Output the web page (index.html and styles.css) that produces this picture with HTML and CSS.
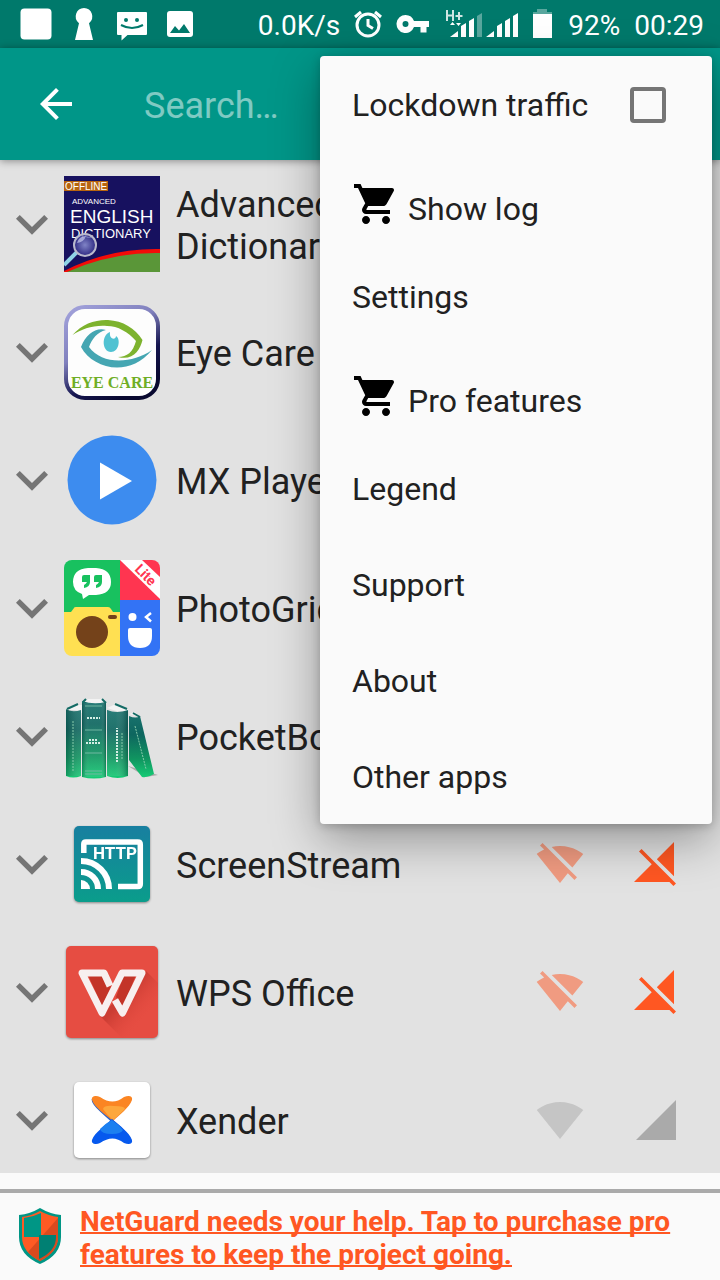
FILE: index.html
```html
<!DOCTYPE html>
<html lang="en">
<head>
  <meta charset="UTF-8" />
  <meta name="viewport" content="width=device-width, initial-scale=1.0"/>
  <title>NetGuard</title>
  <link rel="stylesheet" href="styles.css">
</head>
<body>
  <!-- shared icons -->
  <svg class="sprite" aria-hidden="true">
    <symbol id="chevron" viewBox="0 0 24 24"><path d="M16.59 8.59L12 13.17 7.41 8.59 6 10l6 6 6-6z"/></symbol>
    <symbol id="wifi" viewBox="0 0 24 24"><path d="M12.01 21.49L23.64 7c-.45-.34-4.93-4-11.64-4C5.28 3 .81 6.66.36 7l11.63 14.49.01.01.01-.01z"/></symbol>
    <symbol id="wifi-off" viewBox="0 0 24 24"><path d="M23.64 7c-.45-.34-4.93-4-11.64-4-1.5 0-2.89.19-4.15.48L18.18 13.8 23.64 7zm-6.6 8.22L3.27 1.44 2 2.72l2.05 2.06C1.91 5.76.59 6.82.36 7l11.63 14.49.01.01.01-.01 3.9-4.86 3.32 3.32 1.27-1.27-3.46-3.46z"/></symbol>
    <symbol id="cell" viewBox="0 0 24 24"><path d="M2 22h20V2z"/></symbol>
    <symbol id="cell-off" viewBox="0 0 24 24"><path d="M21 1l-8.59 8.59L21 18.18V1zM4.77 4.5L3.5 5.77l6.36 6.36L1 21h17.73l2 2L22 21.73 4.77 4.5z"/></symbol>
    <symbol id="cart" viewBox="0 0 24 24"><path d="M7 18c-1.1 0-1.99.9-1.99 2S5.9 22 7 22s2-.9 2-2-.9-2-2-2zM1 2v2h2l3.6 7.59-1.35 2.45c-.16.28-.25.61-.25.96 0 1.1.9 2 2 2h12v-2H7.42c-.14 0-.25-.11-.25-.25l.03-.12.9-1.63h7.45c.75 0 1.41-.41 1.75-1.03l3.58-6.49c.08-.14.12-.31.12-.48 0-.55-.45-1-1-1H5.21l-.94-2H1zm16 16c-1.1 0-1.99.9-1.99 2s.89 2 1.99 2 2-.9 2-2-.9-2-2-2z"/></symbol>
  </svg>

  <div class="app">
    <div class="status-bar">
      <div class="notifications">
        <svg viewBox="0 0 48 48"><rect x="8.500" y="8.500" width="31" height="31" rx="4"/></svg>
        <svg viewBox="0 0 48 48"><path d="M24 8a8.500 8.500 0 0 0-5 15.200L15 40h18l-4-16.800A8.500 8.500 0 0 0 24 8z"/></svg>
        <svg viewBox="0 0 48 48">
          <path d="M10 12h28a1 1 0 0 1 1 1v21a1 1 0 0 1-1 1H19.500l-6 5.500V35H10a1 1 0 0 1-1-1V13a1 1 0 0 1 1-1z"/>
          <g class="cut"><circle cx="18" cy="20" r="2"/><circle cx="29" cy="20" r="2"/></g>
          <path class="smile" d="M13 25q11 6 22 0"/>
        </svg>
        <svg viewBox="0 0 48 48">
          <rect x="11" y="11" width="26" height="26" rx="3"/>
          <path class="cut" d="M14 33l5-7 4 4.500 5-6.500 6 9z"/>
        </svg>
      </div>
      <div class="system">
        <span>0.0K/s</span>
        <svg class="alarm" viewBox="0 0 28 28">
          <circle cx="14" cy="15" r="11"/>
          <path d="M14 9v6.500l5 3M1 7l6-5M27 7l-6-5"/>
        </svg>
        <svg class="key" viewBox="0 0 34 18">
          <path fill-rule="evenodd" d="M9.500 0a9 9 0 1 0 8.500 12h6.500v5.500h6V12H33V6H18A9 9 0 0 0 9.500 0zm0 6a3 3 0 1 1 0 6 3 3 0 0 1 0-6z"/>
        </svg>
        <svg class="signal" viewBox="0 0 74 30">
          <path class="net" d="M3 1v11M9 1v11M3 6.500h6M11.500 7h7M15 3v8"/>
          <path d="M6 16l2.500-3 2.500 3zM12 14h5l-2.500 3zM6 28l8-6v6zM17 28V17l5-3v14zM25 28V12l5-3v19z"/>
          <path class="dim" d="M33 28V7l5-3v24z"/>
          <path d="M42 28l8-6v6zM53 28V17l5-3v14zM61 28V12l5-3v19zM69 28V7l5-3v24z"/>
        </svg>
        <svg class="battery" viewBox="0 0 22 30">
          <path class="dim" d="M5 0h10v3h5v4H1V3h4z"/>
          <path d="M1 5h19v24H1z"/>
        </svg>
        <span>92%</span>
        <span>00:29</span>
      </div>
    </div>

    <header class="app-bar">
      <button class="back" aria-label="Back">
        <svg viewBox="0 0 24 24"><path d="M20 11H7.830l5.590-5.590L12 4l-8 8 8 8 1.410-1.410L7.830 13H20v-2z"/></svg>
      </button>
      <input class="search" type="text" placeholder="Search…" aria-label="Search">
    </header>

    <ul class="app-list">
      <li class="row">
        <button class="expand" aria-label="Expand"><svg><use href="#chevron"/></svg></button>
        <svg class="app-icon" viewBox="0 0 96 96">
          <defs><radialGradient id="lens"><stop offset="0" stop-color="#9aa0e0"/><stop offset="1" stop-color="#34308c"/></radialGradient></defs>
          <path fill="#17115f" d="M0 0h96v96H0z"/>
          <path fill="#b8650f" d="M0 5h44v10H0z"/>
          <path fill="#f30c08" d="M0 96v-1q45-23 96-22v23z"/>
          <path fill="#5a9638" d="M3 96q44-20 93-19v19z"/>
          <g class="dict-text">
            <text x="1" y="14" font-size="10">OFFLINE</text>
            <text x="8" y="28" font-size="8">ADVANCED</text>
            <text x="6" y="47" font-size="19">ENGLISH</text>
            <text x="7" y="62" font-size="13">DICTIONARY</text>
          </g>
          <path stroke="#8fd3e6" stroke-width="4" d="M13 76L0 89"/>
          <circle cx="21" cy="69" r="11" fill="url(#lens)" fill-opacity=".8" stroke="#b9b9cc" stroke-width="2"/>
          <path fill="#dfe2ff" fill-opacity=".6" d="M13 67q2-7 9-7-2 6-9 7z"/>
        </svg>
        <span class="name">Advanced English Dictionary</span>
        <button class="toggle wifi blocked" aria-label="Wi-Fi"><svg><use href="#wifi-off"/></svg></button>
        <button class="toggle blocked" aria-label="Mobile"><svg><use href="#cell-off"/></svg></button>
      </li>

      <li class="row">
        <button class="expand" aria-label="Expand"><svg><use href="#chevron"/></svg></button>
        <svg class="app-icon" viewBox="0 0 96 96">
          <defs><linearGradient id="frame" x1="0" y1="0" x2=".6" y2="1"><stop offset="0" stop-color="#a3a3dc"/><stop offset=".45" stop-color="#8080bd"/><stop offset=".75" stop-color="#15154f"/><stop offset="1" stop-color="#090930"/></linearGradient></defs>
          <rect x="2" y="3" width="92" height="91" rx="19" fill="#fdfdfd" stroke="url(#frame)" stroke-width="4"/>
          <path fill="#7db32e" d="M8.500 31C18 20 31 15.500 44 16c15 1 27 8 34.500 20C76 46 69 57 54 53c9 0 15-5 18-16C64 28 54 22 43 22c-14-1-25 3-34.500 9z"/>
          <path fill="#45a6b2" d="M42 26c-10-3-20 4-25 17 12 22 48 31 71 3-20 14-50 15-63-3 3-8 8-15 17-17z"/>
          <path fill="#50c2d2" d="M46 28c-9 3-8 20 1 20 8 0 10-13 5-16 0 4-7 4-6-4z"/>
          <text class="eye-text" x="48" y="84">EYE CARE</text>
        </svg>
        <span class="name">Eye Care</span>
        <button class="toggle wifi blocked" aria-label="Wi-Fi"><svg><use href="#wifi-off"/></svg></button>
        <button class="toggle blocked" aria-label="Mobile"><svg><use href="#cell-off"/></svg></button>
      </li>

      <li class="row">
        <button class="expand" aria-label="Expand"><svg><use href="#chevron"/></svg></button>
        <svg class="app-icon" viewBox="0 0 96 96">
          <circle cx="48" cy="48" r="44.500" fill="#3d8cef"/>
          <path fill="#fff" d="M36 30.500L68 49 36 67.500z"/>
        </svg>
        <span class="name">MX Player</span>
        <button class="toggle wifi blocked" aria-label="Wi-Fi"><svg><use href="#wifi-off"/></svg></button>
        <button class="toggle blocked" aria-label="Mobile"><svg><use href="#cell-off"/></svg></button>
      </li>

      <li class="row">
        <button class="expand" aria-label="Expand"><svg><use href="#chevron"/></svg></button>
        <svg class="app-icon" viewBox="0 0 96 96">
          <defs><clipPath id="tile"><rect width="96" height="96" rx="8"/></clipPath></defs>
          <g clip-path="url(#tile)">
            <path fill="#18c15f" d="M0 0h56v56H0z"/>
            <path fill="#ffe052" d="M0 52h7l3-4q0-1 2-1h32q2 0 3 2l2 3h7v44H0z"/>
            <path fill="#ff3550" d="M56 0h40v40H56z"/>
            <path fill="#3373f5" d="M56 40h40v56H56z"/>
            <path fill="#fff" d="M56 0h22l18 17v22z"/>
            <path fill="#fff" d="M24 8h8q15 1 15 14 0 12-15 13h-7l-6 4-1-5Q9 31 9 22 9 9 24 8z"/>
            <path fill="#18c15f" d="M20 15h6v7q0 5-6 6v-3q2-1 3-3h-5v-5q0-2 2-2zM32 15h6v7q0 5-6 6v-3q2-1 3-3h-5v-5q0-2 2-2z"/>
            <circle cx="28" cy="72" r="16" fill="#74421a"/>
            <rect x="44" y="55" width="9" height="4" rx="2" fill="#74421a"/>
            <circle cx="68.500" cy="57" r="4" fill="#fff"/>
            <path fill="none" stroke="#fff" stroke-width="2.500" d="M87 53l-5 4 5 4.500"/>
            <path fill="#fff" d="M66 68h20q2 0 2 2v6q0 12-12 12T64 76v-6q0-2 2-2z"/>
            <text class="lite-text" x="70" y="10" transform="rotate(45 70 10)">Lite</text>
          </g>
        </svg>
        <span class="name">PhotoGrid</span>
        <button class="toggle wifi blocked" aria-label="Wi-Fi"><svg><use href="#wifi-off"/></svg></button>
        <button class="toggle blocked" aria-label="Mobile"><svg><use href="#cell-off"/></svg></button>
      </li>

      <li class="row">
        <button class="expand" aria-label="Expand"><svg><use href="#chevron"/></svg></button>
        <svg class="app-icon" viewBox="0 0 96 96">
          <defs>
            <linearGradient id="book" x1="0" y1="0" x2="0" y2="1"><stop offset="0" stop-color="#17716c"/><stop offset=".3" stop-color="#0e665f"/><stop offset=".7" stop-color="#109560"/><stop offset="1" stop-color="#16cb75"/></linearGradient>
            <linearGradient id="spine"><stop offset="0" stop-color="#002b28" stop-opacity=".3"/><stop offset=".3" stop-color="#fff" stop-opacity=".08"/><stop offset=".8" stop-color="#fff" stop-opacity=".08"/><stop offset="1" stop-color="#002b28" stop-opacity=".35"/></linearGradient>
          </defs>
          <path fill="#a9a9a9" d="M64 78l30 9-12 2z"/>
          <path fill="#f3f3f3" d="M3 22l10-5h5v8zM20 14l4-3h16l3 4-9 3zM43 20l9-4 12 6-5 3zM65 26l6-2 5 5z"/>
          <path fill="url(#book)" d="M2 21q6 4 15 1v66q-8 3-15 0z"/>
          <path fill="url(#book)" d="M18 13q11 4 24 1v75q-12 3-24 0z"/>
          <path fill="url(#book)" d="M43 22q10 4 21 0v66q-10 4-21 0z"/>
          <path fill="url(#book)" d="M65 28q7 3 11 0l14 58q-6 4-12 3L65 72z"/>
          <path fill="url(#spine)" d="M2 22h15v66H2zM43 23h21v65H43z"/>
          <path fill="url(#spine)" d="M18 15h24v74H18z"/>
          <path fill="none" stroke="#146b65" stroke-width="2" d="M3 21l11-5M19 14l3-3M38 11l4 4M51 16l12 5M69 25l7 4"/>
          <path fill="none" stroke="#71b8a2" d="M21 18h17M21 42h17M21 65h17M21 83h17M21 86h17"/>
          <path fill="none" stroke="#d5eee4" stroke-width="2" stroke-dasharray="2 1" d="M23 30h13M25 52h8M22 55h14M53 74V40"/>
          <path fill="none" stroke="#85caaa" stroke-dasharray="2 1" d="M58 71V45M9 83V33M71 38l11 43"/>
        </svg>
        <span class="name">PocketBook</span>
        <button class="toggle wifi blocked" aria-label="Wi-Fi"><svg><use href="#wifi-off"/></svg></button>
        <button class="toggle blocked" aria-label="Mobile"><svg><use href="#cell-off"/></svg></button>
      </li>

      <li class="row">
        <button class="expand" aria-label="Expand"><svg><use href="#chevron"/></svg></button>
        <svg class="app-icon raised" viewBox="0 0 96 96">
          <defs><linearGradient id="cast" x1="0" y1="0" x2="0" y2="1"><stop offset="0" stop-color="#187fa0"/><stop offset="1" stop-color="#0a9d8b"/></linearGradient></defs>
          <rect x="10" y="10" width="76" height="76" rx="5" fill="url(#cast)"/>
          <g fill="none" stroke="#fff">
            <path stroke-width="5.500" d="M19.800 37V28q0-2 2-2h52q2.500 0 2.500 2.500V68q0 2.500-2.500 2.500H54"/>
            <path stroke-width="6" d="M17 56a17 17 0 0 1 17 17M17 45a28 28 0 0 1 28 28"/>
          </g>
          <path fill="#fff" d="M17 64a9 9 0 0 1 9 9h-9z"/>
          <text class="http-text" x="29" y="43">HTTP</text>
        </svg>
        <span class="name">ScreenStream</span>
        <button class="toggle wifi blocked" aria-label="Wi-Fi"><svg><use href="#wifi-off"/></svg></button>
        <button class="toggle blocked" aria-label="Mobile"><svg><use href="#cell-off"/></svg></button>
      </li>

      <li class="row">
        <button class="expand" aria-label="Expand"><svg><use href="#chevron"/></svg></button>
        <svg class="app-icon raised" viewBox="0 0 96 96">
          <defs><linearGradient id="fade" x1="0" y1="0" x2="1" y2="1"><stop offset=".4" stop-color="#b93229" stop-opacity=".6"/><stop offset=".75" stop-color="#e64c41" stop-opacity="0"/></linearGradient></defs>
          <rect x="2" y="2" width="92" height="92" rx="5" fill="#e64d42"/>
          <path fill="url(#fade)" d="M82 27l12 12v34L74 94H58L36 72z"/>
          <path fill="#c33428" d="M24 31h17l6 12-9 19zM60 31h12L59 62l-7-9z"/>
          <path fill="none" stroke="#f7efef" stroke-width="7" stroke-linejoin="round" d="M46 42l-6-13H18l20 40 20-40h20L58.500 69 51 56"/>
        </svg>
        <span class="name">WPS Office</span>
        <button class="toggle wifi blocked" aria-label="Wi-Fi"><svg><use href="#wifi-off"/></svg></button>
        <button class="toggle blocked" aria-label="Mobile"><svg><use href="#cell-off"/></svg></button>
      </li>

      <li class="row">
        <button class="expand" aria-label="Expand"><svg><use href="#chevron"/></svg></button>
        <svg class="app-icon raised" viewBox="0 0 96 96">
          <rect x="10" y="10" width="76" height="76" rx="5" fill="#fff"/>
          <path fill="#2b62c9" d="M27.500 27q0 5 9 13l11 10 2-3z"/>
          <path fill="#fb8523" d="M28 28c-1-4 4-5 8-3 9 6 16 6 24 0 5-2 9-1 8 3-3 8-12 14-19 21C41 42 31 36 28 28z"/>
          <path fill="#fda73c" d="M39 37q1-4 11-3 11 0 11 3-6 6-12 11-6-5-10-11z"/>
          <path fill="#e8672c" d="M48 47l12 11q7 7 8 12l-3-4-18-17z"/>
          <path fill="#0659ee" d="M28 68c-1 4 4 5 8 3 9-6 16-6 24 0 5 2 9 1 8-3-3-8-12-14-20-21C41 54 31 60 28 68z"/>
          <path fill="#1c80f0" d="M36 57q6-6 12-9 6 4 11 10-2 4-11 4-11 0-12-5z"/>
        </svg>
        <span class="name">Xender</span>
        <button class="toggle wifi" aria-label="Wi-Fi"><svg><use href="#wifi"/></svg></button>
        <button class="toggle" aria-label="Mobile"><svg><use href="#cell"/></svg></button>
      </li>
    </ul>

    <footer class="banner">
      <svg class="shield" viewBox="0 0 42 60">
        <path fill="#009685" d="M21 0q10 6 21 7v22q0 18-21 27Q0 47 0 29V7q11-1 21-7z"/>
        <path fill="#ff5a24" d="M21 3q9 5 18 6v20q0 15-18 24Q3 44 3 29V9q9-1 18-6z"/>
        <path fill="#d94a1f" d="M39 10v19q0 15-18 24-8-4-12-9z"/>
        <path fill="#009685" d="M22 5v24H5V10q9-1 17-5z"/>
        <path fill="#008073" d="M20 27h17v2q0 14-17 22z"/>
      </svg>
      <a href="#">NetGuard needs your help. Tap to purchase pro features to keep the project going.</a>
    </footer>

    <div class="menu">
      <label class="menu-item" for="lockdown">
        Lockdown traffic
        <input type="checkbox" id="lockdown">
      </label>
      <button class="menu-item with-icon"><svg><use href="#cart"/></svg>Show log</button>
      <button class="menu-item">Settings</button>
      <button class="menu-item with-icon"><svg><use href="#cart"/></svg>Pro features</button>
      <button class="menu-item">Legend</button>
      <button class="menu-item">Support</button>
      <button class="menu-item">About</button>
      <button class="menu-item">Other apps</button>
    </div>
  </div>
</body>
</html>
```
FILE: styles.css
```css
* {
  box-sizing: border-box;
  margin: 0;
  padding: 0;
}

body {
  font-family: Roboto, "Noto Sans", sans-serif;
  background-color: #fafafa;
  color: #212121;
}

button {
  border: none;
  background: none;
  font: inherit;
  color: inherit;
  cursor: pointer;
}

svg {
  display: block;
  flex-shrink: 0;
}

.sprite {
  position: absolute;
  width: 0;
  height: 0;
}

.app {
  position: relative;
  display: flex;
  flex-direction: column;
  height: 100vh;
  overflow: hidden;
}

/* status bar */
.status-bar {
  display: flex;
  flex-shrink: 0;
  justify-content: space-between;
  align-items: center;
  height: 48px;
  padding: 0 16px 0 12px;
  background-color: #00796b;
  color: #fff;
  font-size: 28px;
  line-height: 32px;
}

.status-bar svg {
  fill: #fff;
}

.notifications {
  display: flex;
}

.notifications svg {
  width: 48px;
  height: 48px;
}

.notifications .cut {
  fill: #00796b;
}

.notifications .smile {
  fill: none;
  stroke: #00796b;
  stroke-width: 2;
}

.system {
  display: flex;
  align-items: center;
  gap: 14px;
}

.system span {
  padding-top: 4px;
}

.system .dim {
  opacity: 0.35;
}

.system .alarm {
  width: 28px;
  height: 28px;
  fill: none;
  stroke: #fff;
  stroke-width: 3;
}

.key {
  width: 34px;
  height: 18px;
}

.signal {
  width: 74px;
  height: 30px;
}

.signal .net {
  fill: none;
  stroke: #d0e6e3;
  stroke-width: 2;
}

.battery {
  width: 22px;
  height: 30px;
}

/* toolbar */
.app-bar {
  display: flex;
  flex-shrink: 0;
  align-items: center;
  gap: 64px;
  height: 112px;
  padding: 0 32px;
  background-color: #009688;
  box-shadow: 0 1px 8px rgba(0, 0, 0, 0.4);
  z-index: 1;
}

.back svg {
  width: 48px;
  height: 48px;
  fill: #fff;
}

.search {
  flex: 1;
  min-width: 0;
  padding-top: 4px;
  border: none;
  outline: none;
  background: none;
  color: #fff;
  font: inherit;
  font-size: 36px;
}

.search::placeholder {
  color: rgba(255, 255, 255, 0.5);
}

/* application list */
.app-list {
  flex: 1;
  min-height: 0;
  overflow: hidden;
  list-style: none;
  background-color: #e2e2e2;
}

.row {
  display: flex;
  align-items: center;
  height: 128px;
  padding-right: 16px;
}

.expand svg {
  width: 64px;
  height: 64px;
  fill: #757575;
}

.app-icon {
  width: 96px;
  height: 96px;
}

.raised {
  filter: drop-shadow(0 1px 1px rgba(0, 0, 0, 0.4));
}

.name {
  flex: 1;
  padding: 4px 0 0 16px;
  font-size: 36px;
  line-height: 42px;
}

.toggle {
  width: 96px;
  padding: 24px;
}

.toggle svg {
  width: 48px;
  height: 48px;
  fill: #aaa;
}

.toggle.wifi {
  opacity: 0.5;
}

.toggle.blocked svg {
  fill: #ff5722;
}

.dict-text {
  fill: #fff;
  font-family: "Liberation Sans", sans-serif;
}

.eye-text {
  fill: #6fae25;
  font-family: "Liberation Serif", serif;
  font-size: 16px;
  font-weight: bold;
  text-anchor: middle;
}

.lite-text {
  fill: #ff3550;
  font-size: 14px;
  font-weight: bold;
}

.http-text {
  fill: #fff;
  font-size: 17px;
  font-weight: bold;
}

/* donation banner */
.banner {
  display: flex;
  flex-shrink: 0;
  align-items: center;
  gap: 19px;
  margin-top: 16px;
  padding: 12px 19px 9px;
  border-top: 4px solid #aaa;
}

.shield {
  width: 42px;
  height: 60px;
}

.banner a {
  color: #ff5722;
  font-size: 28px;
  font-weight: bold;
  line-height: 33px;
  text-decoration-thickness: 2px;
  text-decoration-skip-ink: none;
}

/* overflow menu */
.menu {
  position: absolute;
  top: 56px;
  right: 8px;
  z-index: 2;
  width: 392px;
  border-radius: 4px;
  background-color: #fafafa;
  box-shadow: 0 16px 48px rgba(0, 0, 0, 0.35), 0 2px 10px rgba(0, 0, 0, 0.2);
}

.menu-item {
  display: flex;
  align-items: center;
  width: 100%;
  height: 96px;
  padding: 2px 32px 0;
  font-size: 32px;
  line-height: 38px;
  text-align: left;
  cursor: pointer;
}

.menu-item input {
  appearance: none;
  width: 36px;
  height: 36px;
  margin: 0 14px 0 auto;
  border: 4px solid #757575;
  border-radius: 4px;
}

.with-icon {
  align-items: flex-end;
  padding-bottom: 20px;
}

.with-icon svg {
  width: 48px;
  height: 48px;
  margin-right: 8px;
  fill: #000;
}
```
